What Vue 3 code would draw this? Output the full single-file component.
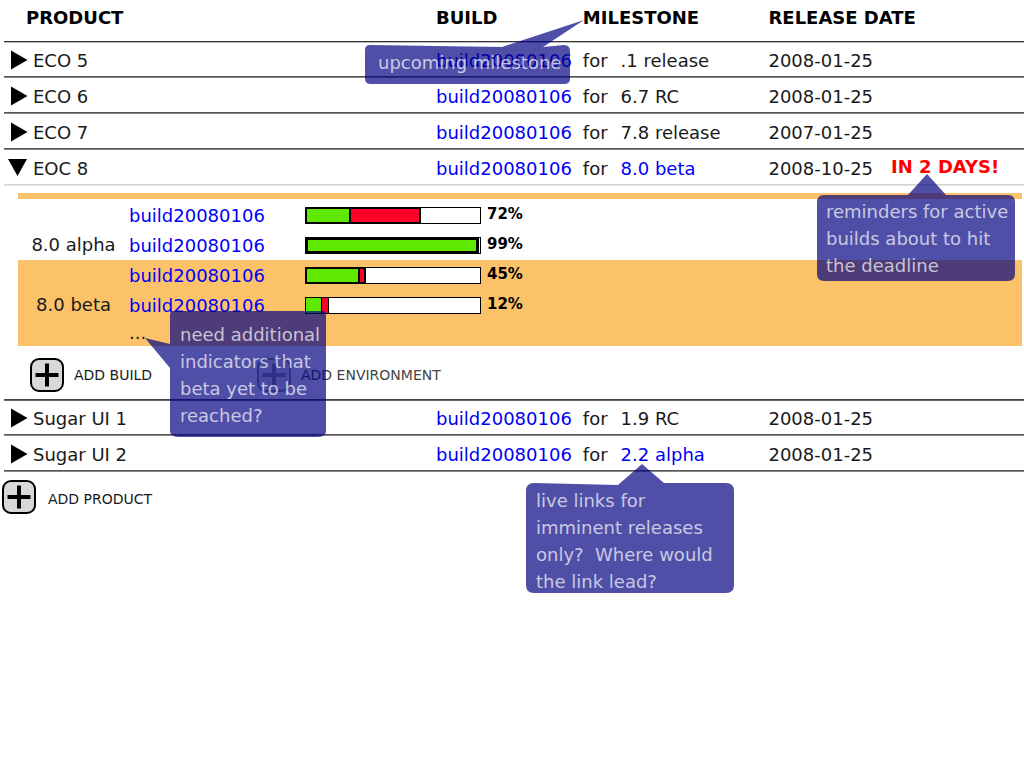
<script setup>
import { ref } from 'vue'

const products = ref([
  { name: 'ECO 5', build: 'build20080106', version: '.1 release', date: '2008-01-25' },
  { name: 'ECO 6', build: 'build20080106', version: '6.7 RC', date: '2008-01-25' },
  { name: 'ECO 7', build: 'build20080106', version: '7.8 release', date: '2007-01-25' },
  {
    name: 'EOC 8',
    build: 'build20080106',
    version: '8.0 beta',
    live: true,
    date: '2008-10-25',
    alert: 'IN 2 DAYS!',
    open: true,
    stages: [
      {
        name: '8.0 alpha',
        builds: [
          { name: 'build20080106', percent: '72%', weight: 'medium', passed: 26, failed: 41 },
          { name: 'build20080106', percent: '99%', weight: 'heavy', passed: 99, failed: 0 }
        ]
      },
      {
        name: '8.0 beta',
        current: true,
        builds: [
          { name: 'build20080106', percent: '45%', weight: 'medium', passed: 31, failed: 5 },
          { name: 'build20080106', percent: '12%', weight: 'light', passed: 9.7, failed: 4.6 }
        ]
      }
    ]
  },
  { name: 'Sugar UI 1', build: 'build20080106', version: '1.9 RC', date: '2008-01-25' },
  { name: 'Sugar UI 2', build: 'build20080106', version: '2.2 alpha', live: true, date: '2008-01-25' }
])

const notes = [
  {
    id: 'milestone',
    lines: ['upcoming milestone'],
    shape: 'M5 0L137 2L219 -25L178 2L199 0Q205 0 205 6V34Q205 39 199 39H6Q0 39 0 34V5Q0 0 5 0Z'
  },
  {
    id: 'deadline',
    lines: ['reminders for active', 'builds about to hit', 'the deadline'],
    shape: 'M7 0H91L110 -21L129 0H191Q198 0 198 7V79Q198 86 191 86H7Q0 86 0 79V7Q0 0 7 0Z'
  },
  {
    id: 'indicators',
    lines: ['need additional', 'indicators that', 'beta yet to be', 'reached?'],
    shape: 'M3 0H153Q156 0 156 4V121Q155 126 147 126H10Q1 126 0 121V57L-25 27L0 33V4Q0 0 3 0Z'
  },
  {
    id: 'links',
    lines: ['live links for', 'imminent releases', 'only?  Where would', 'the link lead?'],
    shape: 'M8 0L92 2L116 -19L138 0H200Q208 0 208 8V102Q208 110 200 110H8Q0 110 0 102V8Q0 0 8 0Z'
  }
]
</script>

<template>
  <main class="page">
    <table class="products">
      <colgroup>
        <col class="col-product" />
        <col class="col-build" />
        <col class="col-for" />
        <col class="col-version" />
        <col />
      </colgroup>
      <thead>
        <tr>
          <th class="first">PRODUCT</th>
          <th>BUILD</th>
          <th colspan="2">MILESTONE</th>
          <th>RELEASE DATE</th>
        </tr>
      </thead>
      <tbody>
        <template v-for="product in products" :key="product.name">
          <tr :class="['product', { open: product.open }]">
            <td>
              <button class="toggle" type="button" :aria-expanded="!!product.open" @click="product.open = !product.open">
                <svg width="20" height="20" viewBox="0 0 20 20" aria-hidden="true">
                  <path :d="product.open ? 'M0 0H19L9.5 17Z' : 'M3 -0.5L19.500 9L3 18.500Z'" />
                </svg>
                <span>{{ product.name }}</span>
              </button>
            </td>
            <td><a href="#">{{ product.build }}</a></td>
            <td>for</td>
            <td>
              <a v-if="product.live" href="#">{{ product.version }}</a>
              <template v-else>{{ product.version }}</template>
            </td>
            <td>
              {{ product.date }}<strong v-if="product.alert" class="alert">{{ product.alert }}</strong>
            </td>
          </tr>
          <tr v-if="product.open && product.stages" class="details">
            <td colspan="5">
              <div class="stages">
                <section v-for="stage in product.stages" :key="stage.name" :class="['stage', { current: stage.current }]">
                  <h2>{{ stage.name }}</h2>
                  <ul>
                    <li v-for="(build, i) in stage.builds" :key="i">
                      <a href="#">{{ build.name }}</a>
                      <div :class="['bar', build.weight]">
                        <span class="passed" :style="{ width: build.passed + '%' }"></span>
                        <span v-if="build.failed" class="failed" :style="{ width: build.failed + '%' }"></span>
                      </div>
                      <strong>{{ build.percent }}</strong>
                    </li>
                    <li v-if="stage.current" class="more">...</li>
                  </ul>
                </section>
              </div>
              <div class="actions">
                <button class="add" type="button">
                  <svg width="34" height="34" viewBox="0 0 34 34" aria-hidden="true">
                    <rect x="1" y="1" width="32" height="32" rx="8" />
                    <path d="M5.500 17H28.500M17 5.500V28.500" />
                  </svg>
                  <span>ADD BUILD</span>
                </button>
                <button class="add faded" type="button">
                  <svg width="34" height="34" viewBox="0 0 34 34" aria-hidden="true">
                    <rect x="1" y="1" width="32" height="32" rx="8" />
                    <path d="M5.500 17H28.500M17 5.500V28.500" />
                  </svg>
                  <span>ADD ENVIRONMENT</span>
                </button>
              </div>
            </td>
          </tr>
        </template>
      </tbody>
    </table>

    <button class="add add-product" type="button">
      <svg width="34" height="34" viewBox="0 0 34 34" aria-hidden="true">
        <rect x="1" y="1" width="32" height="32" rx="8" />
        <path d="M5.500 17H28.500M17 5.500V28.500" />
      </svg>
      <span>ADD PRODUCT</span>
    </button>

    <aside v-for="note in notes" :key="note.id" :class="['note', note.id]">
      <svg width="1" height="1" aria-hidden="true"><path :d="note.shape" /></svg>
      <p v-for="line in note.lines" :key="line">{{ line }}</p>
    </aside>
  </main>
</template>

<style>
body {
  background: #fff;
}
</style>

<style scoped>
.page {
  position: relative;
  padding-bottom: 96px;
  font-family: Verdana, "DejaVu Sans", sans-serif;
  font-size: 18px;
  color: #1a1a1a;
}

.products {
  width: calc(100% - 4px);
  margin-left: 4px;
  table-layout: fixed;
  border-collapse: separate;
  border-spacing: 0;
}

.col-product { width: 42.35%; }
.col-build { width: 14.4%; }
.col-for { width: 3.7%; }
.col-version { width: 14.5%; }

th,
td {
  padding: 0;
  text-align: left;
  vertical-align: top;
  white-space: nowrap;
}

th {
  padding-bottom: 5px;
  border-bottom: 1px solid #333;
  box-shadow: 0 1px #bbb;
  line-height: 36px;
  color: #000;
}

th.first {
  padding-left: 22px;
}

.product td {
  padding-top: 2px;
  border-bottom: 1px solid #888;
  box-shadow: inset 0 -1px #555;
  line-height: 33px;
}

.product.open td {
  border-color: #e4e4e4;
  box-shadow: inset 0 -1px #d4d4d4;
}

a {
  color: #0000f5;
  text-decoration: none;
}

button {
  display: flex;
  align-items: center;
  padding: 0;
  border: 0;
  background: none;
  font-family: inherit;
  color: inherit;
  cursor: pointer;
}

.toggle {
  gap: 5px;
  padding-left: 4px;
  font-size: 18px;
  line-height: 33px;
}

.toggle svg {
  overflow: visible;
}

.alert {
  margin-left: 18px;
  vertical-align: 2px;
  line-height: 18px;
  color: #f00;
}

.details > td {
  border-bottom: 1px solid #444;
  box-shadow: 0 1px #666;
}

.stages {
  margin: 7px 2px 0 14px;
  border-top: 6px solid #fcc269;
}

.stage {
  display: grid;
  grid-template-columns: 111px 1fr;
  padding-top: 1px;
}

.stage.current {
  padding-top: 0;
  background: #fcc269;
}

h2 {
  margin: 0;
  padding-top: 30px;
  font-size: 18px;
  font-weight: normal;
  line-height: 30px;
  text-align: center;
}

ul {
  margin: 0;
  padding: 0;
  list-style: none;
}

li {
  display: grid;
  grid-template-columns: 176px 176px auto;
  justify-content: start;
  align-items: start;
  height: 30px;
  line-height: 32px;
}

li.more {
  height: 26px;
  line-height: 26px;
}

li strong {
  margin-left: 6px;
  font-size: 15px;
  line-height: 28px;
  color: #000;
}

.bar {
  display: flex;
  height: 17px;
  margin-top: 7px;
  background: #fff;
  box-shadow: inset 0 0 0 1px #000;
}

.bar span {
  box-sizing: border-box;
  border: 1px solid #000;
}

.passed { background: #5fe800; }
.failed { margin-left: -1px; background: #ff0028; }

.bar.medium span { border-width: 2px; }
.bar.medium .failed { margin-left: -2px; }
.bar.heavy span { border-width: 3px; }

.actions {
  display: grid;
  grid-template-columns: 227px auto;
  justify-content: start;
  padding: 12px 0 7px 26px;
}

.add {
  gap: 10px;
  font-size: 14px;
  line-height: 16px;
}

.add svg {
  fill: #d8d8d8;
  stroke: #000;
  stroke-width: 2;
}

.add path {
  stroke-width: 4;
}

.add.faded {
  color: #444;
}

.add.faded svg {
  opacity: 0.4;
}

.add-product {
  gap: 12px;
  margin: 8px 0 0 2px;
}

.add-product span {
  padding-top: 4px;
}

.note {
  position: absolute;
  box-sizing: border-box;
  padding: 4px 0 0 10px;
  color: rgba(255, 255, 255, 0.7);
}

.note svg {
  position: absolute;
  top: 0;
  left: 0;
  overflow: visible;
  fill: rgba(0, 0, 128, 0.69);
}

.note p {
  position: relative;
  margin: 0;
  line-height: 27px;
  white-space: pre;
}

.milestone { top: 45px; left: 365px; padding-left: 13px; }
.deadline { top: 195px; left: 817px; padding: 3px 0 0 9px; }
.indicators { top: 311px; left: 170px; padding-top: 10px; }
.links { top: 483px; left: 526px; }
</style>
